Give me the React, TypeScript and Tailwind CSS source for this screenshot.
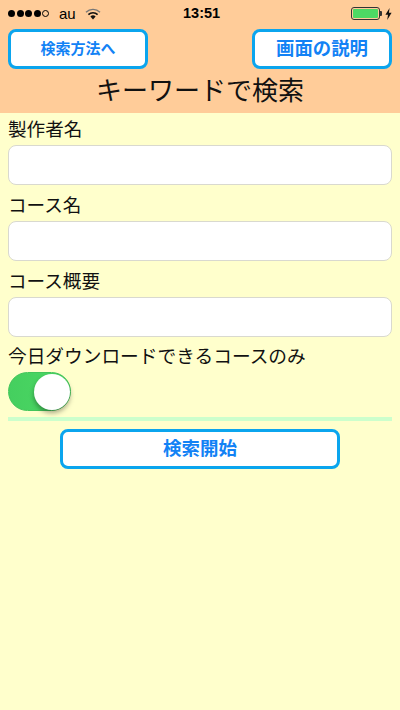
import React from 'react';

const font = { fontFamily: '"Noto Sans CJK JP", "Liberation Sans", sans-serif' };

const Field = ({ label }: { label: string }) => (
  <div className="flex flex-col">
    <div className="h-[32px] flex items-center pb-[1px] text-[18.6px] leading-none text-[#111]">{label}</div>
    <div className="h-[40px] rounded-[8px] bg-white border border-[#d9d9cf]" />
  </div>
);

const Btn = ({ text, cls }: { text: string; cls: string }) => (
  <div className={`flex items-center justify-center bg-white border-[3px] border-[#0ba5ee] rounded-[8px] text-[#1282f5] font-bold ${cls}`}>
    <span className="relative top-[-1px]">{text}</span>
  </div>
);

export default function App() {
  return (
    <div className="w-[400px] h-[710px] bg-[#ffffcc] flex flex-col overflow-hidden" style={font}>
      {/* header */}
      <div className="h-[113px] bg-[#ffcc99] flex flex-col">
        <div className="h-[29px] flex items-center px-[8px] pb-[2px] relative text-black">
          <div className="flex items-center gap-[1.5px]">
            {[0, 1, 2, 3].map(i => (
              <span key={i} className="w-[7px] h-[7px] rounded-full bg-black" />
            ))}
            <span className="w-[7px] h-[7px] rounded-full border border-black" />
          </div>
          <span className="ml-[10px] text-[15px] leading-none" style={{ fontFamily: '"Liberation Sans", sans-serif' }}>au</span>
          <svg className="ml-[9px]" width="16" height="12" viewBox="0 0 16 12">
            <path d="M1 4.2 A10 10 0 0 1 15 4.2" fill="none" stroke="#777" strokeWidth="1.4" />
            <path d="M3.4 6.6 A6.6 6.6 0 0 1 12.6 6.6" fill="none" stroke="#111" strokeWidth="1.6" />
            <path d="M8 11.5 L5.4 8.6 A3.6 3.6 0 0 1 10.6 8.6 Z" fill="#111" />
          </svg>
          <span className="absolute left-[183px] text-[14.5px] font-bold leading-none" style={{ fontFamily: '"Liberation Sans", sans-serif' }}>13:51</span>
          <div className="ml-auto flex items-center gap-[3px]">
            <div className="flex items-center">
              <div className="w-[29px] h-[13px] border border-[#333] rounded-[3px] p-[1px]">
                <div className="w-full h-full bg-[#4cd964] rounded-[1px]" />
              </div>
              <div className="w-[2px] h-[5px] bg-[#333] rounded-r-[1px]" />
            </div>
            <svg width="7" height="12" viewBox="0 0 7 12">
              <path d="M4.6 0 L0.4 6.8 H3 L2.2 12 L6.6 4.8 H3.9 Z" fill="#111" />
            </svg>
          </div>
        </div>
        <div className="flex justify-between px-[8px]">
          <Btn text="検索方法へ" cls="w-[140px] h-[40px] text-[15px]" />
          <Btn text="画面の説明" cls="w-[140px] h-[40px] text-[18.4px]" />
        </div>
        <div className="flex-1 flex items-center justify-center pb-[5px] text-[26px] leading-none text-[#111]">キーワードで検索</div>
      </div>

      {/* form */}
      <div className="flex flex-col px-[8px] gap-[4px]">
        <Field label="製作者名" />
        <Field label="コース名" />
        <Field label="コース概要" />
      </div>
      <div className="px-[8px] h-[35px] flex items-center pt-[2px] text-[18.7px] leading-none text-[#111]">今日ダウンロードできるコースのみ</div>
      <div className="px-[8px]">
        <div className="w-[63px] h-[39px] rounded-full bg-gradient-to-r from-[#45cf5f] to-[#4cd964] border border-[#43c65b] relative">
          <div className="absolute right-0 top-[1px] w-[36px] h-[36px] rounded-full bg-white shadow-[0_3px_5px_rgba(0,0,0,0.35)]" />
        </div>
      </div>
      <div className="mx-[8px] mt-[6px] h-[4px] bg-[#ccffcc]" />
      <div className="flex justify-center mt-[8px]">
        <Btn text="検索開始" cls="w-[280px] h-[40px] text-[18.5px]" />
      </div>
    </div>
  );
}
